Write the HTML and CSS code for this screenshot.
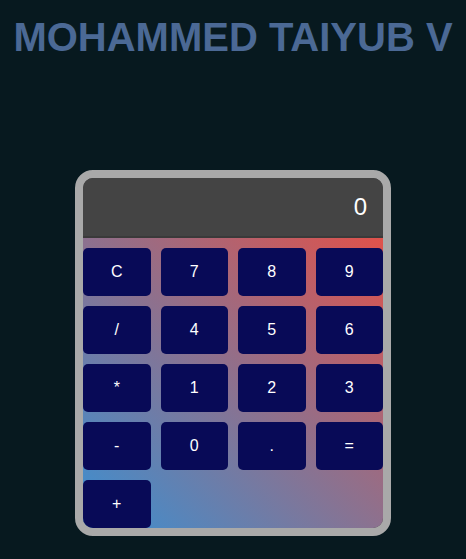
FILE: index.html
```html
<!DOCTYPE html>
<html lang="en">
<head>
<meta charset="utf-8">
<title>Calculator</title>
<link rel="stylesheet" href="styles.css">
</head>
<body>
<h1 class="title">MOHAMMED TAIYUB V</h1>
<div class="calc">
  <div class="display">0</div>
  <div class="keys">
    <button class="key">C</button>
    <button class="key">7</button>
    <button class="key">8</button>
    <button class="key">9</button>
    <button class="key">/</button>
    <button class="key">4</button>
    <button class="key">5</button>
    <button class="key">6</button>
    <button class="key">*</button>
    <button class="key">1</button>
    <button class="key">2</button>
    <button class="key">3</button>
    <button class="key">-</button>
    <button class="key">0</button>
    <button class="key">.</button>
    <button class="key">=</button>
    <button class="key">+</button>
  </div>
</div>
</body>
</html>
```
FILE: styles.css
```css
html, body {
  margin: 0;
  padding: 0;
  background: #07191f;
  font-family: "Liberation Sans", Arial, sans-serif;
}
body {
  height: 559px;
  overflow: hidden;
}
.title {
  margin: 14px 0 0;
  font-size: 40px;
  line-height: 46px;
  font-weight: bold;
  text-align: center;
  color: #4b6995;
}
.calc {
  width: 300px;
  margin: 110px auto 0;
  border: 8px solid #a9a9a9;
  border-radius: 18px;
  overflow: hidden;
  background: #444;
}
.display {
  height: 58px;
  border-bottom: 2px solid #3a3a3a;
  background: #444;
  color: #fff;
  font-size: 24px;
  line-height: 58px;
  text-align: right;
  padding-right: 16px;
}
.keys {
  display: grid;
  grid-template-columns: repeat(4, 1fr);
  grid-auto-rows: 48px;
  gap: 10px;
  padding-top: 10px;
  background: linear-gradient(to top right, #3a90d2, #df524b);
}
.key {
  border: none;
  border-radius: 5px;
  background: #080a57;
  color: #fff;
  font-family: "Liberation Sans", Arial, sans-serif;
  font-size: 16px;
  padding: 0;
}
```
